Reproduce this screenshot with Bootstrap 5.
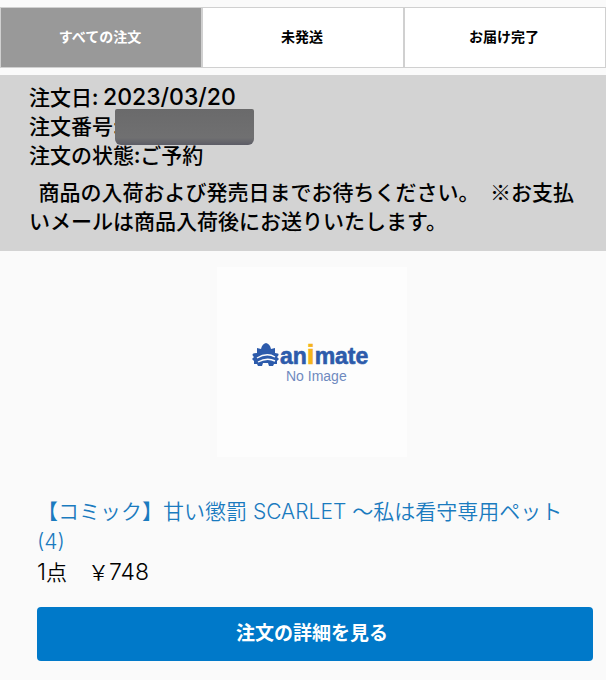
<!DOCTYPE html>
<html lang="ja">
<head>
<meta charset="utf-8">
<meta name="viewport" content="width=device-width, initial-scale=1">
<title>注文履歴</title>
<link href="https://cdn.jsdelivr.net/npm/bootstrap@5.3.0/dist/css/bootstrap.min.css" rel="stylesheet">
<style>
body { background: #fafafa; color: #000; font-family: "Noto Sans CJK JP", sans-serif; font-size: 21px; line-height: 29px; }
.order-tabs { border: 1px solid #d0d0d0; margin-top: 7px; margin-bottom: 7px; }
.order-tabs .tab-btn { flex: 1 1 0; height: 59px; border: 0; background: #fff; color: #000; font-size: 14px; line-height: 20px; font-weight: 700; padding: 0 2px 4px 0; }
.order-tabs .tab-btn + .tab-btn { border-left: 2px solid #d0d0d0; }
.order-tabs .tab-btn.active { background: #999; color: #fff; }
.order-head { background: #d3d3d3; padding: 7px 16px 16px 29px; font-weight: 500; }
.order-note { margin-top: 8px; }
.latin-num { font-family: Inter, sans-serif; font-size: 23px; line-height: 24px; }
.masked { position: absolute; left: 100%; top: -1px; margin-left: -4px; width: 139px; height: 36px; border-radius: 2px 2px 6px 6px; background: linear-gradient(#6a6a6b, #707071 80%, #5c5c66); }
.order-item { padding: 16px 13px 19px 37px; }
.item-pic { width: 190px; height: 190px; margin-bottom: 40px; margin-right: 6px; background: #fdfdfd; }
.item-text { font-weight: 350; }
.item-text a { display: block; line-height: 30px; color: #1a7bbf; font-family: Inter, "Noto Sans CJK JP", sans-serif; }
.item-text .latin-num { font-weight: 300; }
.detail-btn { margin-top: 21px; height: 54px; border-radius: 4px; background: #0079c9; color: #fff; font-size: 19px; font-weight: 700; padding: 0 6px 4px 0; }
.detail-btn:hover { background: #006bb3; color: #fff; }
</style>
</head>
<body>
<nav class="order-tabs d-flex" aria-label="注文の絞り込み">
  <button type="button" class="tab-btn active">すべての注文</button>
  <button type="button" class="tab-btn">未発送</button>
  <button type="button" class="tab-btn">お届け完了</button>
</nav>
<main>
  <section class="order-head">
    <div>注文日: <span class="latin-num">2023/03/20</span></div>
    <div><span class="position-relative">注文番号:<span class="masked"></span></span></div>
    <div>注文の状態:ご予約</div>
    <p class="order-note mb-0">&nbsp;&nbsp;商品の入荷および発売日までお待ちください。　※お支払いメールは商品入荷後にお送りいたします。</p>
  </section>
  <section class="order-item">
    <div class="d-flex justify-content-center">
      <svg class="item-pic" viewBox="0 0 190 190" role="img" aria-label="animate No Image">
        <path fill="#2d5bab" d="M40 86l0-5 4 1q1-5 5-6 4 1 5 6l4-1 0 5q5 0 3 3l-1 1 2 2-2 2v3h-3l-1 2h-4l-1-3h-5l-1 3h-4l-1-2h-3v-3l-2-2 2-2-1-1q-2-3 4-3z"/>
        <path fill="none" stroke="#fdfdfd" stroke-width="1.4" d="M40 91q10-6 18-1M41 95q9-5 17-1"/>
        <g font-family="Liberation Sans, Arial, sans-serif">
          <text x="63" y="97" font-size="23" font-weight="700" fill="#2d5bab" stroke="#2d5bab" stroke-width=".6">an<tspan font-size="28" fill="#f5b51b" stroke="#f5b51b">i</tspan>mate</text>
          <text x="69" y="114" font-size="14" fill="#6f8abf">No Image</text>
        </g>
      </svg>
    </div>
    <div class="item-text">
      <a href="#" class="text-decoration-none">【コミック】甘い懲罰 SCARLET 〜私は看守専用ペット (4)</a>
      <div><span class="latin-num">1</span>点　￥<span class="latin-num">748</span></div>
    </div>
    <button type="button" class="btn detail-btn w-100">注文の詳細を見る</button>
  </section>
</main>
<script src="https://cdn.jsdelivr.net/npm/bootstrap@5.3.0/dist/js/bootstrap.bundle.min.js"></script>
</body>
</html>
